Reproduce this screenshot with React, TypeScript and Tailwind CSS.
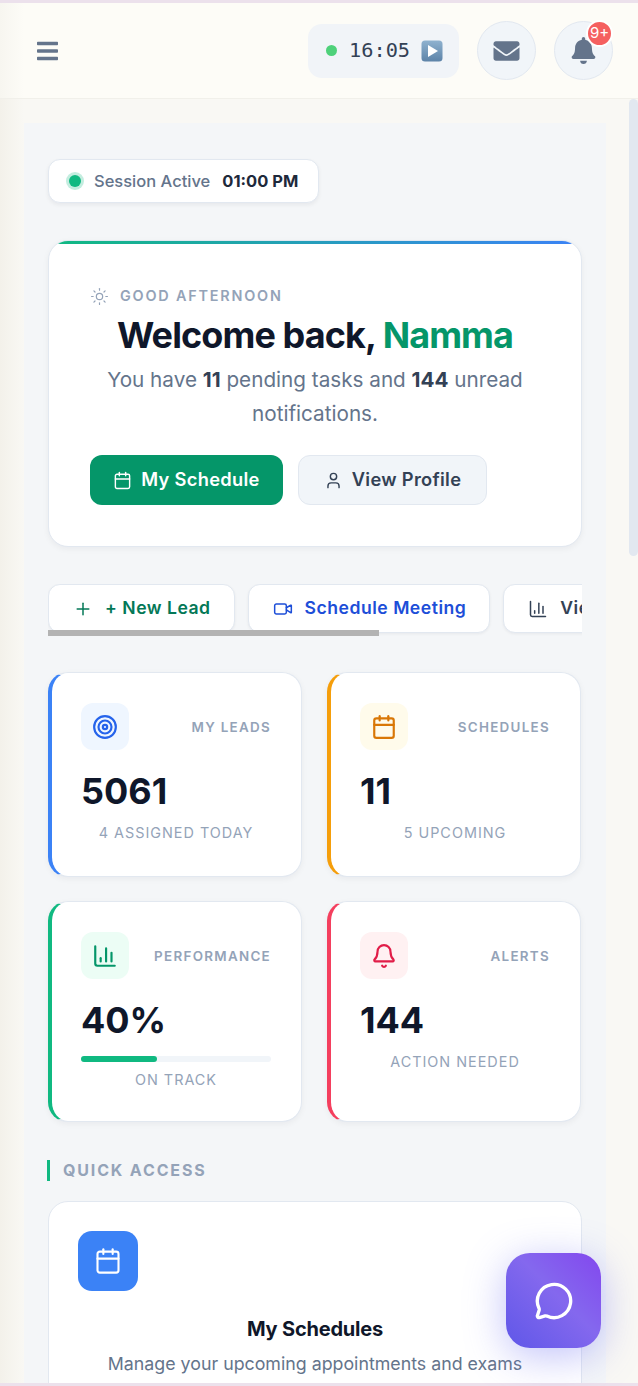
import { BarChart3, Bell, Calendar, ChartColumn, MessageCircle, Plus, Sun, Target, User, Video } from "lucide-react";
import { FaBars, FaBell, FaEnvelope } from "react-icons/fa";
import type { ReactNode } from "react";

const font = { fontFamily: "Inter, 'Noto Sans', sans-serif" };

function StatCard({
  border,
  iconBg,
  icon,
  label,
  value,
  sub,
  children,
  height,
}: {
  border: string;
  iconBg: string;
  icon: ReactNode;
  label: string;
  value: string;
  sub: string;
  children?: ReactNode;
  height: string;
}) {
  return (
    <div className={`${height} rounded-[20px] border border-[#e2e8f0] border-l-4 ${border} bg-white pl-[29px] pr-[30px] pt-[30px] shadow-[0_2px_6px_rgba(15,23,42,0.05)]`}>
      <div className="flex items-center justify-between">
        <div className={`flex h-[47px] w-[48px] items-center justify-center rounded-[12px] ${iconBg}`}>{icon}</div>
        <span className="pt-[2px] text-[13.4px] font-semibold tracking-[1.3px] text-[#94a3b8]">{label}</span>
      </div>
      <div className="mt-[19px] text-[36px] font-bold leading-[44px] text-[#0f172a]">{value}</div>
      {children}
      <div className="mt-[10px] text-center text-[14.4px] leading-[20px] tracking-[1px] text-[#94a3b8]">{sub}</div>
    </div>
  );
}

function ActionButton({ icon, label, color }: { icon: ReactNode; label: string; color: string }) {
  return (
    <button className={`flex h-[49px] shrink-0 items-center gap-[12px] rounded-[12px] border border-[#e2e8f0] bg-white pl-[24px] pr-[23px] text-[17.6px] font-semibold tracking-[0.5px] shadow-[0_1px_3px_rgba(15,23,42,0.06)] ${color}`}>
      {icon}
      {label}
    </button>
  );
}

export default function App() {
  return (
    <div style={font} className="relative flex h-[1386px] w-[638px] flex-col overflow-hidden bg-[#ece1ec] py-[3px]">
      <header className="flex h-[96px] shrink-0 items-center justify-between border-b border-[#f1f0ea] bg-[linear-gradient(90deg,#f7f6f0_0,#fdfcf7_24px)] pl-[37px] pr-[25px]">
        <FaBars className="h-[24px] w-[21px] text-[#64748b]" />
        <div className="flex items-center gap-[18px]">
          <div className="flex h-[54px] w-[151px] items-center rounded-[14px] bg-[#f1f4f8] pl-[18px]">
            <span className="h-[11px] w-[11px] rounded-full bg-[#4ed17a]" />
            <span className="ml-[12px] font-['DejaVu_Sans_Mono',monospace] text-[20.3px] text-[#334155]">16:05</span>
            <svg className="ml-[11px]" width="22" height="22" viewBox="0 0 22 22">
              <defs>
                <linearGradient id="play" x1="0" y1="0" x2="0" y2="1">
                  <stop offset="0" stopColor="#8fb2cf" />
                  <stop offset="1" stopColor="#5d83a8" />
                </linearGradient>
              </defs>
              <rect x="0.5" y="0.5" width="21" height="21" rx="3.5" fill="url(#play)" />
              <path d="M7 5 L17 11 L7 17 Z" fill="#fff" />
            </svg>
          </div>
          <div className="flex h-[59px] w-[59px] items-center justify-center rounded-full border-[1.5px] border-[#e2e8f0] bg-[#f1f5f9]">
            <FaEnvelope className="h-[26px] w-[27px] text-[#64748b]" />
          </div>
          <div className="relative flex h-[59px] w-[59px] items-center justify-center rounded-full border-[1.5px] border-[#e2e8f0] bg-[#f1f5f9]">
            <FaBell className="h-[27px] w-[25px] text-[#64748b]" />
            <span className="absolute right-[-1px] top-[-2px] flex h-[27px] w-[27px] items-center justify-center rounded-full border-2 border-white bg-[#f56060] text-[15px] text-white">9+</span>
          </div>
        </div>
      </header>

      <main className="relative min-h-0 flex-1 bg-[linear-gradient(90deg,#f3f1ea_0,#f9f8f4_24px)] pl-[24px] pr-[32px] pt-[24px]">
        <div className="h-full overflow-hidden bg-[#f4f6f8] px-[24px] pt-[36px]">
          <div className="flex h-[44px] w-[271px] items-center rounded-[12px] border border-[#e2e8f0] bg-white pl-[20px] shadow-[0_2px_4px_rgba(15,23,42,0.06)]">
            <span className="h-[12px] w-[12px] rounded-full bg-[#10b981] shadow-[0_0_0_3px_rgba(16,185,129,0.25)]" />
            <span className="ml-[13px] text-[16.5px] font-medium text-[#64748b]">Session Active</span>
            <span className="ml-[12px] text-[16.5px] font-bold text-[#1e293b]">01:00 PM</span>
          </div>

          <section className="relative mt-[37px] h-[307px] overflow-hidden rounded-[20px] border border-[#e2e8f0] bg-white px-[41px] pt-[45px] shadow-[0_2px_6px_rgba(15,23,42,0.05)]">
            <div className="absolute inset-x-0 top-0 h-[3px] bg-[linear-gradient(90deg,#10b981,#3b82f6)]" />
            <div className="flex items-center gap-[11px] text-[#94a3b8]">
              <Sun className="h-[19px] w-[19px]" strokeWidth={1.5} />
              <span className="text-[14.4px] font-semibold leading-[20px] tracking-[1.8px]">GOOD AFTERNOON</span>
            </div>
            <h1 className="mt-[5px] text-center text-[36px] font-bold leading-[48px] tracking-[-0.9px] text-[#0f172a]">
              Welcome back, <span className="text-[#059669]">Namma</span>
            </h1>
            <p className="mt-[4px] text-center text-[20.7px] leading-[34px] text-[#64748b]">
              You have <strong className="font-bold text-[#334155]">11</strong> pending tasks and <strong className="font-bold text-[#334155]">144</strong> unread notifications.
            </p>
            <div className="mt-[24px] flex gap-[15px]">
              <button className="flex h-[50px] w-[193px] items-center justify-center gap-[9px] rounded-[12px] bg-[#059669] text-[18.3px] font-semibold tracking-[0.3px] text-white">
                <Calendar className="h-[19px] w-[19px]" strokeWidth={1.8} />
                My Schedule
              </button>
              <button className="flex h-[50px] w-[189px] items-center justify-center gap-[9px] rounded-[12px] border-[1.5px] border-[#e2e8f0] bg-[#f1f5f9] text-[18.3px] font-semibold tracking-[0.3px] text-[#334155]">
                <User className="h-[19px] w-[19px]" strokeWidth={1.8} />
                View Profile
              </button>
            </div>
          </section>

          <div className="relative mt-[37px] h-[52px] overflow-hidden">
            <div className="flex gap-[13px]">
              <ActionButton icon={<Plus className="h-[20px] w-[20px]" strokeWidth={1.8} />} label="+ New Lead" color="text-[#047857]" />
              <ActionButton icon={<Video className="h-[20px] w-[20px]" strokeWidth={1.8} />} label="Schedule Meeting" color="text-[#1d4ed8]" />
              <ActionButton icon={<BarChart3 className="h-[20px] w-[20px]" strokeWidth={1.8} />} label="View Reports" color="text-[#334155]" />
            </div>
            <div className="absolute bottom-0 left-0 h-[6px] w-[331px] bg-[#b3b3b3]" />
          </div>

          <div className="mt-[36px] grid grid-cols-[254px_254px] gap-x-[25px] gap-y-[24px]">
            <StatCard
              height="h-[205px]"
              border="border-l-[#3b82f6]"
              iconBg="bg-[#eff6ff]"
              icon={<Target className="h-[26px] w-[26px] text-[#2563eb]" />}
              label="MY LEADS"
              value="5061"
              sub="4 ASSIGNED TODAY"
            />
            <StatCard
              height="h-[205px]"
              border="border-l-[#f59e0b]"
              iconBg="bg-[#fffbeb]"
              icon={<Calendar className="h-[26px] w-[26px] text-[#d97706]" />}
              label="SCHEDULES"
              value="11"
              sub="5 UPCOMING"
            />
            <StatCard
              height="h-[221px]"
              border="border-l-[#10b981]"
              iconBg="bg-[#ecfdf5]"
              icon={<ChartColumn className="h-[26px] w-[26px] text-[#059669]" />}
              label="PERFORMANCE"
              value="40%"
              sub="ON TRACK"
            >
              <div className="-mb-[2px] mt-[14px] h-[6px] rounded-full bg-[#f1f5f9]">
                <div className="h-full w-[40%] rounded-full bg-[#10b981]" />
              </div>
            </StatCard>
            <StatCard
              height="h-[221px]"
              border="border-l-[#f43f5e]"
              iconBg="bg-[#fff1f2]"
              icon={<Bell className="h-[26px] w-[26px] text-[#e11d48]" />}
              label="ALERTS"
              value="144"
              sub="ACTION NEEDED"
            />
          </div>

          <h2 className="-ml-[1px] mt-[38px] border-l-[3px] border-[#10b981] pl-[13px] text-[16px] font-bold leading-[21px] tracking-[1.85px] text-[#94a3b8]">QUICK ACCESS</h2>

          <section className="mt-[20px] h-[400px] rounded-[20px] border border-[#e2e8f0] bg-white px-[29px] pt-[29px]">
            <div className="flex h-[60px] w-[60px] items-center justify-center rounded-[14px] bg-[#3b82f6]">
              <Calendar className="h-[28px] w-[28px] text-white" strokeWidth={1.8} />
            </div>
            <h3 className="mt-[24px] text-center text-[20px] font-bold leading-[28px] tracking-[-0.2px] text-[#0f172a]">My Schedules</h3>
            <p className="mt-[8px] whitespace-nowrap text-center text-[17.8px] leading-[26px] text-[#64748b]">Manage your upcoming appointments and exams</p>
          </section>
        </div>
        <div className="absolute right-0 top-0 h-[457px] w-[9px] rounded-full bg-[#e2e8f0]" />
      </main>

      <button className="absolute left-[506px] top-[1253px] flex h-[95px] w-[95px] items-center justify-center rounded-[24px] bg-[linear-gradient(45deg,#5f57e8_0%,#8468ee_55%,#8347ee_100%)] text-white shadow-[0_8px_40px_rgba(99,102,241,0.4)]">
        <MessageCircle className="h-[40px] w-[40px]" strokeWidth={2} />
      </button>
    </div>
  );
}
